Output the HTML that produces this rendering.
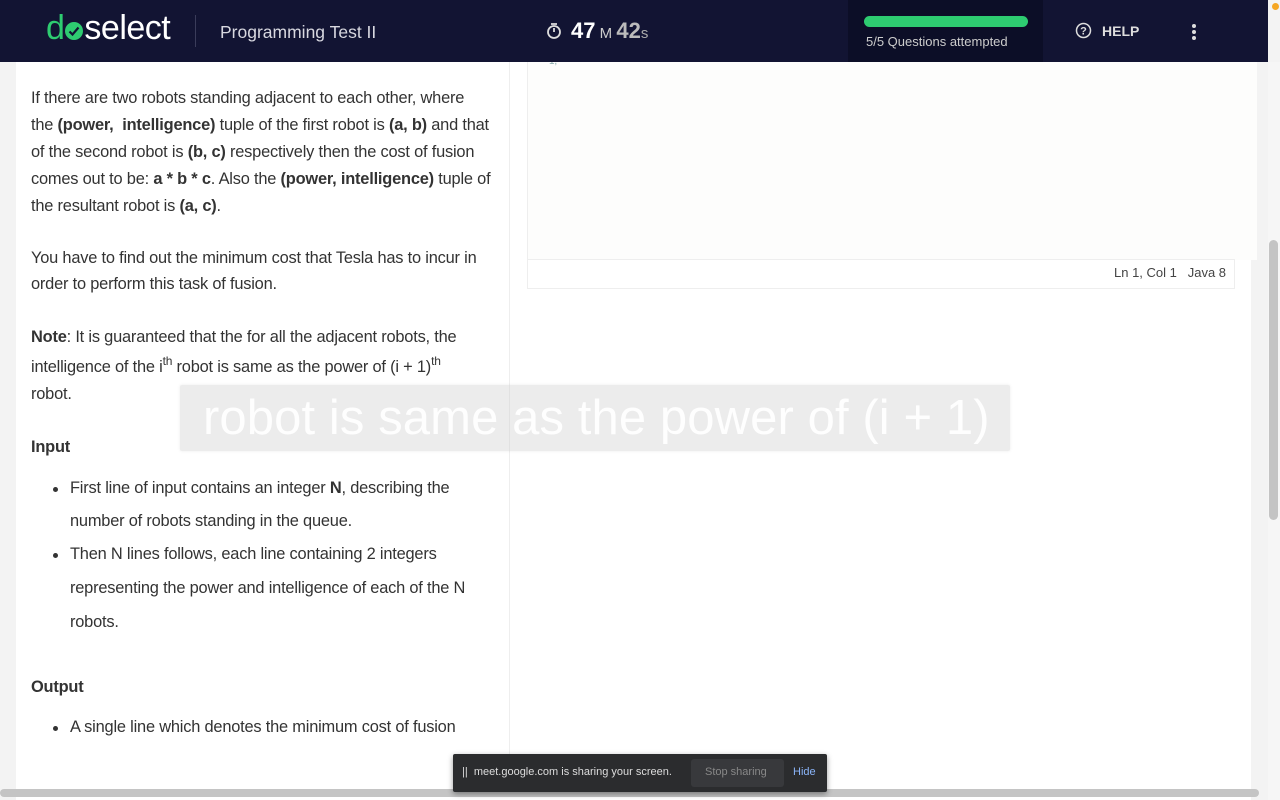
<!DOCTYPE html>
<html><head><meta charset="utf-8"><style>
*{margin:0;padding:0;box-sizing:border-box}
body{width:1280px;height:800px;overflow:hidden;background:#f3f3f3;font-family:"Liberation Sans",sans-serif;position:relative;color:#333}
.hdr{position:absolute;left:0;top:0;width:1268px;height:62px;background:#121433}
.prog{position:absolute;left:848px;top:0;width:195px;height:62px;background:#0c0e27}
.t{position:absolute;white-space:nowrap;font-size:16.4px;letter-spacing:-0.2px;color:#333}
b{font-weight:bold}
sup{font-size:12px;vertical-align:7px;line-height:0}
.li::before{content:"";position:absolute;left:-17px;top:8px;width:5px;height:5px;border-radius:50%;background:#333}
</style></head><body>
<div style="position:absolute;left:16px;top:62px;width:494px;height:738px;background:#fff"></div>
<div style="position:absolute;left:509px;top:62px;width:1px;height:700px;background:#eee"></div>
<div style="position:absolute;left:510px;top:62px;width:741px;height:738px;background:#fff"></div>
<div style="position:absolute;left:527px;top:62px;width:730px;height:198px;background:#fdfdfc;border-left:1px solid #eee"></div>
<div style="position:absolute;left:527px;top:259px;width:708px;height:30px;border:1px solid #eee;background:#fff"></div>
<div class="t" style="left:1114px;top:265px;font-size:13px;color:#444;letter-spacing:0">Ln 1, Col 1&nbsp;&nbsp;&nbsp;Java 8</div>
<div class="t" style="left:549px;top:56px;font-size:10px;color:#8aa">1,</div>
<div style="position:absolute;left:1268px;top:62px;width:12px;height:738px;background:#f6f6f6"></div>
<div style="position:absolute;left:1269px;top:240px;width:9px;height:280px;background:#c4c4c4;border-radius:5px"></div>
<div style="position:absolute;left:0;top:789px;width:1259px;height:8px;background:#c4c4c4;border-radius:4px"></div>

<div class="hdr"></div>
<div class="prog"></div>
<div style="position:absolute;left:1272px;top:3px;width:7px;height:7px;border-radius:50%;background:#f5a623"></div>
<div class="t" style="left:46px;top:9px;font-size:34px;color:#fff;letter-spacing:-0.5px"><span style="color:#2ecc71">d</span><span style="display:inline-block;width:18px;height:18px;border-radius:50%;background:#2ecc71;vertical-align:-1px;position:relative;margin:0 1px"><svg width="18" height="18" style="position:absolute;left:0;top:0"><path d="M4.5 9.5l3 3 6-7" stroke="#121433" stroke-width="2.2" fill="none"/></svg></span>select</div>
<div style="position:absolute;left:195px;top:15px;width:1px;height:32px;background:#3a3c5a"></div>
<div class="t" style="left:220px;top:22px;font-size:17.5px;color:#d8d8e0;letter-spacing:0">Programming Test II</div>
<svg style="position:absolute;left:546px;top:22px" width="16" height="18"><circle cx="8" cy="10" r="6" stroke="#ddd" stroke-width="1.8" fill="none"/><path d="M5 2h6M8 10V6" stroke="#ddd" stroke-width="1.8"/></svg>
<div class="t" style="left:571px;top:18px;font-size:22px;color:#fff;font-weight:bold;letter-spacing:0">47<span style="font-size:15px;font-weight:normal;color:#ccc"> M </span><span style="color:#bbb">42</span><span style="font-size:15px;font-weight:normal;color:#aaa">s</span></div>
<div style="position:absolute;left:864px;top:16px;width:164px;height:11px;border-radius:6px;background:#2ecc71"></div>
<div class="t" style="left:866px;top:34px;font-size:13px;color:#ccc;letter-spacing:0">5/5 Questions attempted</div>
<svg style="position:absolute;left:1075px;top:22px" width="17" height="17"><circle cx="8.5" cy="8.5" r="7" stroke="#ddd" stroke-width="1.5" fill="none"/><text x="8.5" y="12.5" font-size="11" text-anchor="middle" fill="#ddd" font-family="Liberation Sans" font-weight="bold">?</text></svg>
<div class="t" style="left:1102px;top:23px;font-size:14px;color:#ddd;font-weight:bold;letter-spacing:0">HELP</div>
<div style="position:absolute;left:1192px;top:24px;width:4px;height:4px;border-radius:50%;background:#ddd;box-shadow:0 6px 0 #ddd,0 12px 0 #ddd"></div>

<div class="t" style="left:31px;top:89px">If there are two robots standing adjacent to each other, where</div>
<div class="t" style="left:31px;top:116px">the <b>(power, &nbsp;intelligence)</b> tuple of the first robot is <b>(a, b)</b> and that</div>
<div class="t" style="left:31px;top:143px">of the second robot is <b>(b, c)</b> respectively then the cost of fusion</div>
<div class="t" style="left:31px;top:170px">comes out to be: <b>a * b * c</b>. Also the <b>(power, intelligence)</b> tuple of</div>
<div class="t" style="left:31px;top:197px">the resultant robot is <b>(a, c)</b>.</div>
<div class="t" style="left:31px;top:249px">You have to find out the minimum cost that Tesla has to incur in</div>
<div class="t" style="left:31px;top:275px">order to perform this task of fusion.</div>
<div class="t" style="left:31px;top:328px"><b>Note</b>: It is guaranteed that the for all the adjacent robots, the</div>
<div class="t" style="left:31px;top:358px">intelligence of the i<sup>th</sup> robot is same as the power of (i + 1)<sup>th</sup></div>
<div class="t" style="left:31px;top:385px">robot.</div>
<div class="t" style="left:31px;top:438px"><b>Input</b></div>
<div class="t li" style="left:70px;top:479px">First line of input contains an integer <b>N</b>, describing the</div>
<div class="t" style="left:70px;top:512px">number of robots standing in the queue.</div>
<div class="t li" style="left:70px;top:545px">Then N lines follows, each line containing 2 integers</div>
<div class="t" style="left:70px;top:579px">representing the power and intelligence of each of the N</div>
<div class="t" style="left:70px;top:613px">robots.</div>
<div class="t" style="left:31px;top:678px"><b>Output</b></div>
<div class="t li" style="left:70px;top:718px">A single line which denotes the minimum cost of fusion</div>

<div style="position:absolute;left:180px;top:385px;width:830px;height:66px;background:rgba(205,205,205,0.38);border-radius:2px;box-shadow:0 0 3px rgba(0,0,0,0.08)"></div>
<div class="t" style="left:203px;top:390px;font-size:49px;color:rgba(255,255,255,0.92);letter-spacing:0.1px">robot is same as the power of (i + 1)</div>

<div style="position:absolute;left:453px;top:754px;width:374px;height:38px;background:#2b2c2e;border-radius:2px;box-shadow:0 2px 6px rgba(0,0,0,.4)"></div>
<div class="t" style="left:462px;top:766px;font-size:11px;color:#ddd;letter-spacing:0">||&nbsp; meet.google.com is sharing your screen.</div>
<div style="position:absolute;left:691px;top:759px;width:93px;height:28px;background:#38393c;border-radius:3px"></div>
<div class="t" style="left:705px;top:766px;font-size:11px;color:#888;letter-spacing:0">Stop sharing</div>
<div class="t" style="left:793px;top:766px;font-size:11px;color:#8ab4f8;letter-spacing:0">Hide</div>
</body></html>
